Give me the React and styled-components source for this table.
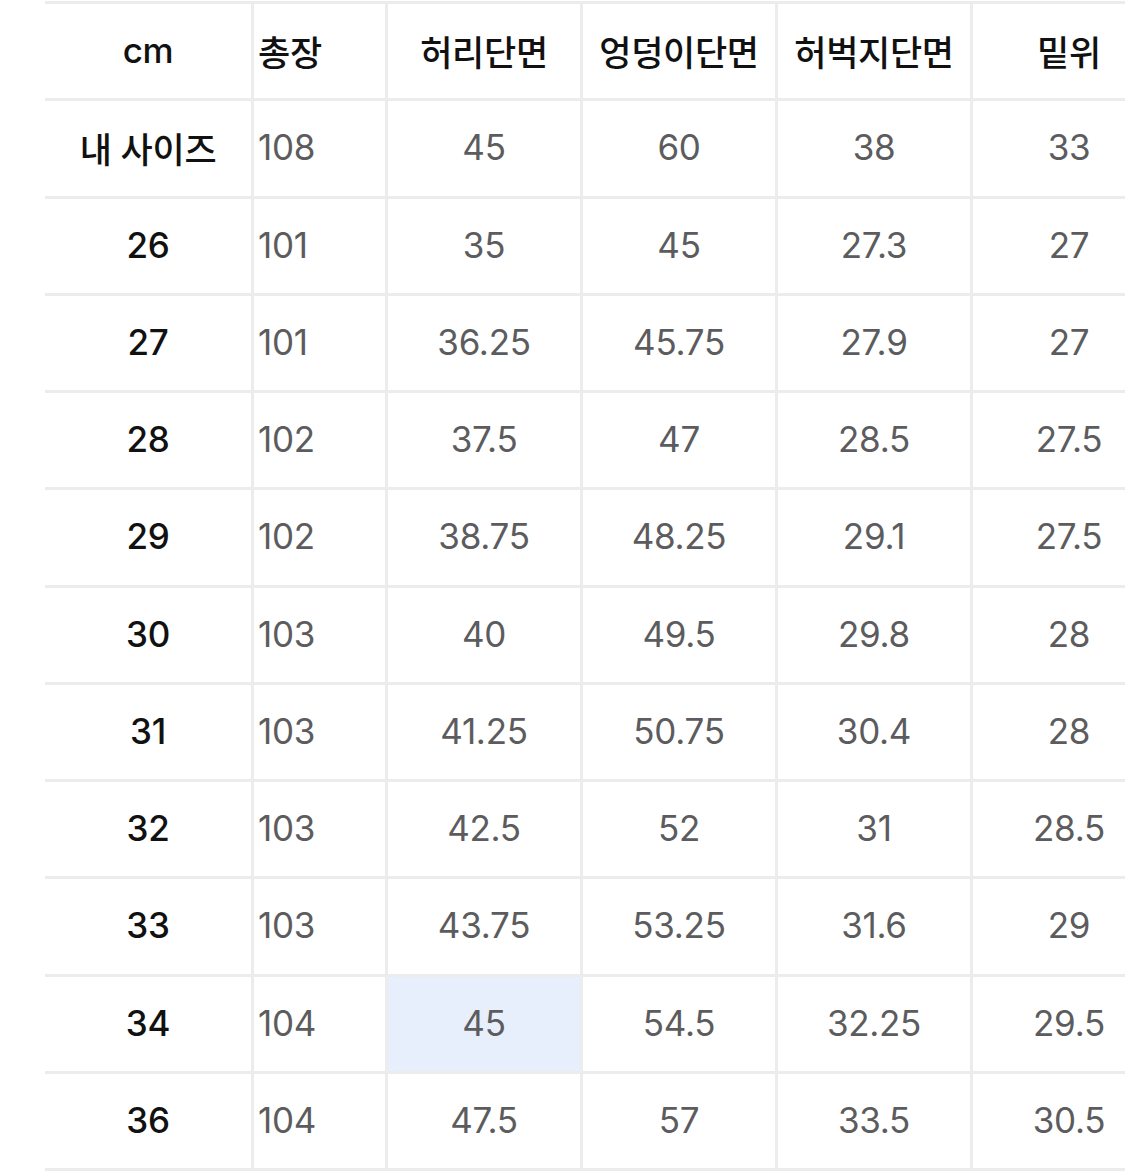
import React from 'react';
import styled, { createGlobalStyle } from 'styled-components';

const GlobalStyle = createGlobalStyle`
  html, body {
    margin: 0;
    padding: 0;
    background: #ffffff;
    overflow: hidden;
  }
  body {
    font-family: "Inter", "Noto Sans CJK KR", sans-serif;
  }
`;

const Page = styled.div`
  padding: 1px 0 0 45px;
  width: 1125px;
  box-sizing: border-box;
`;

const Table = styled.div`
  display: grid;
  grid-template-columns: 206px 134px 195px 195px 195px 195px;
  border-top: 3px solid #ececec;
  width: max-content;
`;

const Cell = styled.div`
  box-sizing: border-box;
  height: 97.25px;
  border-bottom: 3px solid #ececec;
  border-left: ${(p) => (p.$first ? 'none' : '3px solid #ececec')};
  background: ${(p) => (p.$hl ? '#e7eefc' : '#ffffff')};
  display: flex;
  align-items: center;
  justify-content: ${(p) => (p.$left ? 'flex-start' : 'center')};
  padding-left: ${(p) => (p.$left ? '4px' : '0')};
  padding-bottom: 2px;
  font-family: "Inter", "Noto Sans CJK KR", sans-serif;
  font-size: 35px;
  font-weight: ${(p) => (p.$label ? 500 : 400)};
  color: ${(p) => (p.$label ? '#111111' : '#5c5c5e')};
  letter-spacing: -0.3px;
  white-space: nowrap;
`;

const headers = ['cm', '총장', '허리단면', '엉덩이단면', '허벅지단면', '밑위'];

const rows = [
  ['내 사이즈', '108', '45', '60', '38', '33'],
  ['26', '101', '35', '45', '27.3', '27'],
  ['27', '101', '36.25', '45.75', '27.9', '27'],
  ['28', '102', '37.5', '47', '28.5', '27.5'],
  ['29', '102', '38.75', '48.25', '29.1', '27.5'],
  ['30', '103', '40', '49.5', '29.8', '28'],
  ['31', '103', '41.25', '50.75', '30.4', '28'],
  ['32', '103', '42.5', '52', '31', '28.5'],
  ['33', '103', '43.75', '53.25', '31.6', '29'],
  ['34', '104', '45', '54.5', '32.25', '29.5'],
  ['36', '104', '47.5', '57', '33.5', '30.5'],
];

export default function App() {
  return (
    <Page>
      <GlobalStyle />
      <Table>
        {headers.map((h, i) => (
          <Cell key={h} $label $first={i === 0} $left={i === 1}>
            {h}
          </Cell>
        ))}
        {rows.map((row, r) =>
          row.map((v, i) => (
            <Cell
              key={`${r}-${i}`}
              $first={i === 0}
              $left={i === 1}
              $label={i === 0}
              $hl={r === 9 && i === 2}
            >
              {v}
            </Cell>
          ))
        )}
      </Table>
    </Page>
  );
}
